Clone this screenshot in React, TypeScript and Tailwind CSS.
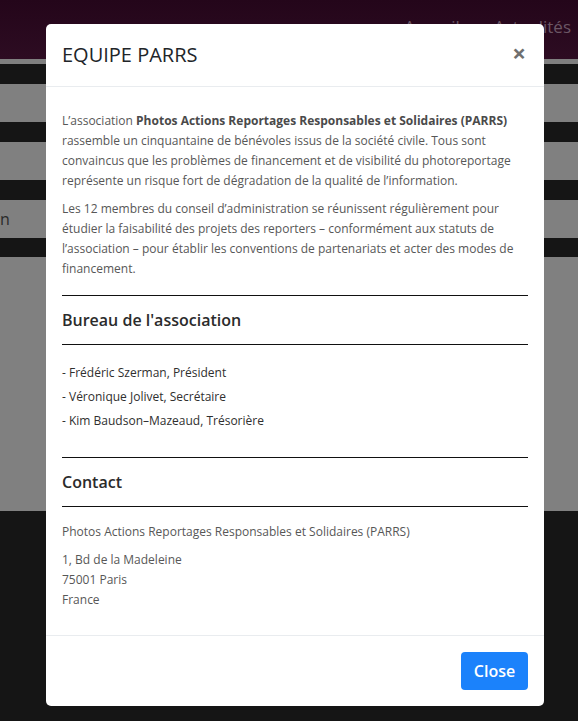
const font = { fontFamily: '"Open Sans", "Liberation Sans", sans-serif' }

const bands = [
    { h: "h-[5px]", c: "bg-[#7f7f7f]" },
    { h: "h-[20px]", c: "bg-[#151515]" },
    { h: "h-[38px]", c: "bg-[#808080]" },
    { h: "h-[20px]", c: "bg-[#151515]" },
    { h: "h-[38px]", c: "bg-[#808080]" },
    { h: "h-[20px]", c: "bg-[#151515]" },
]

const bureau = [
    "- Frédéric Szerman, Président",
    "- Véronique Jolivet, Secrétaire",
    "- Kim Baudson–Mazeaud, Trésorière",
]

function Backdrop() {
    return (
        <div className="flex flex-col">
            <div className="h-[59px] bg-gradient-to-b from-[#24061a] to-[#2d0c22] flex items-start justify-end pt-[14px] pr-[7px] gap-[34px] text-[17px] text-[#6b5765]">
                <span>Accueil</span>
                <span>Actualités</span>
            </div>
            {bands.map((b, i) => (
                <div key={i} className={`${b.h} ${b.c}`} />
            ))}
            <div className="h-[38px] bg-[#808080] flex items-center text-[16px] text-[#2a2a2a]">
                n
            </div>
            <div className="h-[19px] bg-[#151515]" />
            <div className="h-[254px] bg-[#808080]" />
            <div className="h-[209px] bg-[#151515]" />
        </div>
    )
}

export default function App() {
    return (
        <div className="relative h-[721px] w-[578px] overflow-hidden bg-[#151515]" style={font}>
            <Backdrop />
            <div className="absolute left-[46px] top-[24px] w-[498px] bg-white rounded-[5px] flex flex-col">
                <div className="flex items-center justify-between px-4 py-4 border-b border-[#e9ecef]">
                    <h5 className="text-[20px] leading-[30px] text-[#212529]">EQUIPE PARRS</h5>
                    <button className="text-[24px] leading-none font-bold text-[#6f6f6f] pr-[2px] -mt-[4px]">×</button>
                </div>
                <div className="px-4 pt-6 pb-[25px] text-[12px] leading-[20px] text-[#575757]">
                    <p className="mb-2">
                        L’association <b className="font-bold text-[#4a4a4a]">Photos Actions Reportages Responsables et Solidaires (PARRS)</b> rassemble un cinquantaine de bénévoles issus de la société civile. Tous sont convaincus que les problèmes de financement et de visibilité du photoreportage représente un risque fort de dégradation de la qualité de l’information.
                    </p>
                    <p>
                        Les 12 membres du conseil d’administration se réunissent régulièrement pour étudier la faisabilité des projets des reporters – conformément aux statuts de l’association – pour établir les conventions de partenariats et acter des modes de financement.
                    </p>
                    <div className="mt-4 border-t border-[#111]" />
                    <h3 className="my-3 text-[16px] leading-[24px] font-semibold text-[#2b2b2b]">Bureau de l'association</h3>
                    <div className="border-t border-[#111]" />
                    <ul className="mt-[18px] text-[#2f2f2f]">
                        {bureau.map((m) => (
                            <li key={m} className="mb-1">{m}</li>
                        ))}
                    </ul>
                    <div className="mt-[26px] border-t border-[#111]" />
                    <h3 className="my-3 text-[16px] leading-[24px] font-semibold text-[#2b2b2b]">Contact</h3>
                    <div className="border-t border-[#111]" />
                    <p className="mt-[15px] mb-2">Photos Actions Reportages Responsables et Solidaires (PARRS)</p>
                    <p>
                        1, Bd de la Madeleine<br />
                        75001 Paris<br />
                        France
                    </p>
                </div>
                <div className="flex justify-end p-4 border-t border-[#e9ecef]">
                    <button className="h-[38px] w-[67px] rounded-[4px] bg-[#1b82fb] text-white text-[16px] font-semibold">
                        Close
                    </button>
                </div>
            </div>
        </div>
    )
}
